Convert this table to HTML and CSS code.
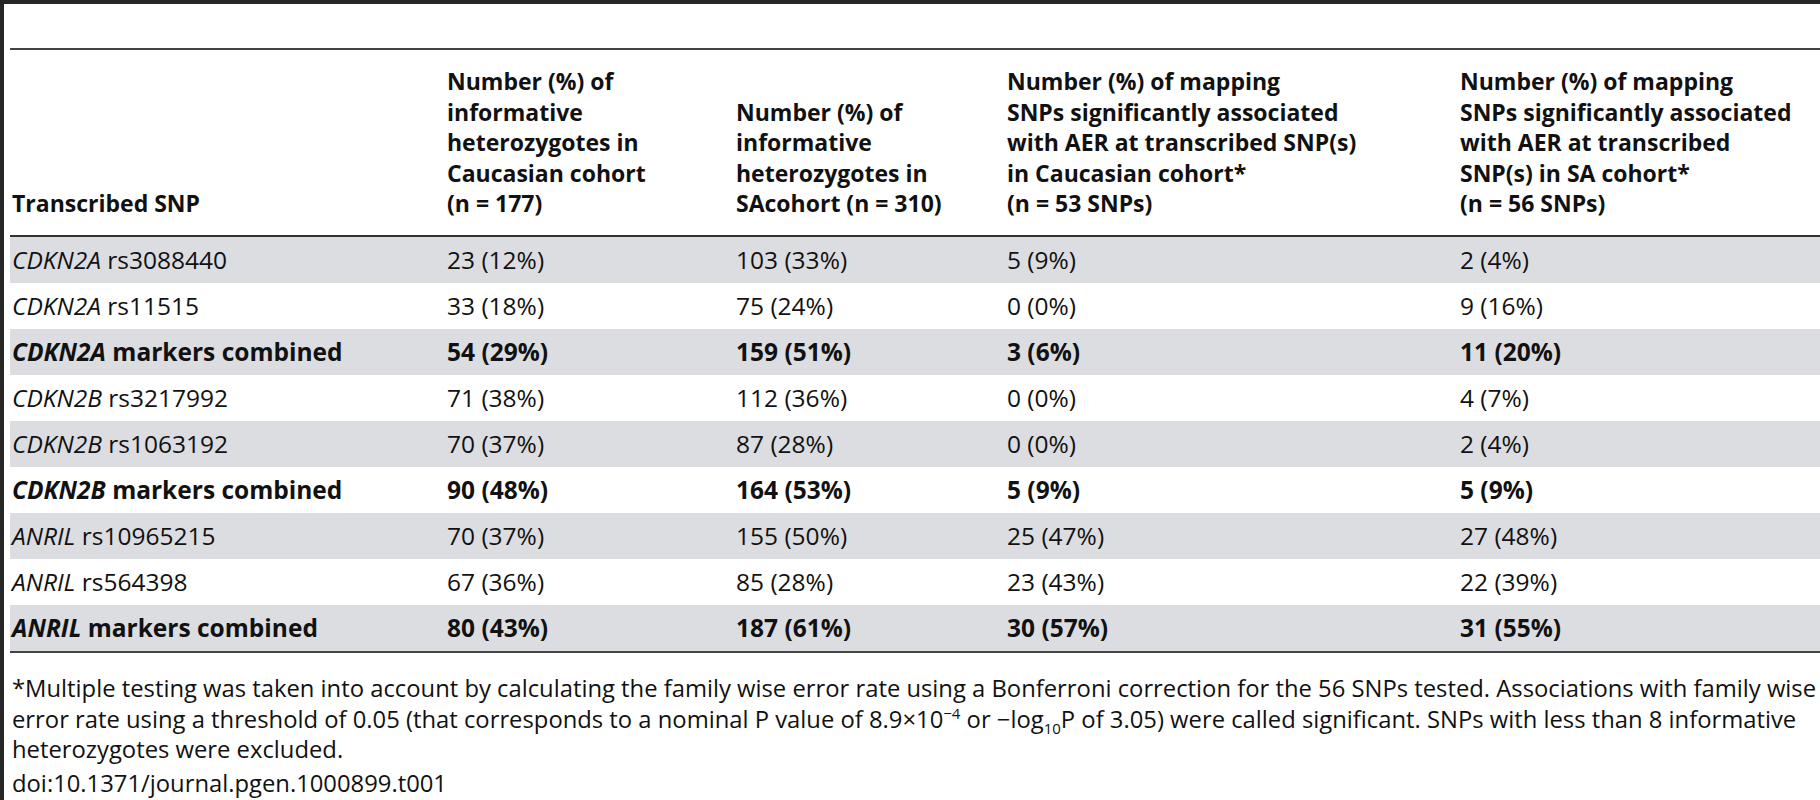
FILE: index.html
```html
<!DOCTYPE html>
<html>
<head>
    <title>Table 1</title>
    <link rel="stylesheet" href="styles.css">
</head>
<body>
    <div class="frame">
        <table class="snp-table">
            <colgroup>
                <col class="c1">
                <col class="c2">
                <col class="c3">
                <col class="c4">
                <col class="c5">
            </colgroup>
            <thead>
                <tr>
                    <th>Transcribed SNP</th>
                    <th>Number (%) of<br>informative<br>heterozygotes in<br>Caucasian cohort<br>(n = 177)</th>
                    <th>Number (%) of<br>informative<br>heterozygotes in<br>SAcohort (n = 310)</th>
                    <th>Number (%) of mapping<br>SNPs significantly associated<br>with AER at transcribed SNP(s)<br>in Caucasian cohort*<br>(n = 53 SNPs)</th>
                    <th>Number (%) of mapping<br>SNPs significantly associated<br>with AER at transcribed<br>SNP(s) in SA cohort*<br>(n = 56 SNPs)</th>
                </tr>
            </thead>
            <tbody>
                <tr class="shade">
                    <td><i>CDKN2A</i> rs3088440</td><td>23 (12%)</td><td>103 (33%)</td><td>5 (9%)</td><td>2 (4%)</td>
                </tr>
                <tr>
                    <td><i>CDKN2A</i> rs11515</td><td>33 (18%)</td><td>75 (24%)</td><td>0 (0%)</td><td>9 (16%)</td>
                </tr>
                <tr class="shade total">
                    <td><i>CDKN2A</i> markers combined</td><td>54 (29%)</td><td>159 (51%)</td><td>3 (6%)</td><td>11 (20%)</td>
                </tr>
                <tr>
                    <td><i>CDKN2B</i> rs3217992</td><td>71 (38%)</td><td>112 (36%)</td><td>0 (0%)</td><td>4 (7%)</td>
                </tr>
                <tr class="shade">
                    <td><i>CDKN2B</i> rs1063192</td><td>70 (37%)</td><td>87 (28%)</td><td>0 (0%)</td><td>2 (4%)</td>
                </tr>
                <tr class="total">
                    <td><i>CDKN2B</i> markers combined</td><td>90 (48%)</td><td>164 (53%)</td><td>5 (9%)</td><td>5 (9%)</td>
                </tr>
                <tr class="shade">
                    <td><i>ANRIL</i> rs10965215</td><td>70 (37%)</td><td>155 (50%)</td><td>25 (47%)</td><td>27 (48%)</td>
                </tr>
                <tr>
                    <td><i>ANRIL</i> rs564398</td><td>67 (36%)</td><td>85 (28%)</td><td>23 (43%)</td><td>22 (39%)</td>
                </tr>
                <tr class="shade total">
                    <td><i>ANRIL</i> markers combined</td><td>80 (43%)</td><td>187 (61%)</td><td>30 (57%)</td><td>31 (55%)</td>
                </tr>
            </tbody>
        </table>

        <div class="footnote">
            <p>*Multiple testing was taken into account by calculating the family wise error rate using a Bonferroni correction for the 56 SNPs tested. Associations with family wise<br>error rate using a threshold of 0.05 (that corresponds to a nominal P value of 8.9&times;10<sup>&minus;4</sup> or &minus;log<sub>10</sub>P of 3.05) were called significant. SNPs with less than 8 informative<br>heterozygotes were excluded.</p>
            <p class="doi">doi:10.1371/journal.pgen.1000899.t001</p>
        </div>
    </div>
</body>
</html>
```

FILE: styles.css
```css
html, body {
    margin: 0;
    padding: 0;
    background: #fff;
    overflow: hidden;
}

body {
    font-family: "Open Sans", "DejaVu Sans", sans-serif;
    color: #111;
    width: 1820px;
    height: 800px;
}

/* Dark frame on top and left, like the figure viewer */
.frame {
    border-top: 4px solid #262626;
    border-left: 4px solid #262626;
    padding: 44px 0 4px 6px;
    width: 1900px;
    box-sizing: border-box;
}

.snp-table {
    border-collapse: collapse;
    table-layout: fixed;
    width: 1870px;
    border-top: 2px solid #444;
    border-bottom: 2px solid #444;
}

.c1 { width: 435px; }
.c2 { width: 289px; }
.c3 { width: 271px; }
.c4 { width: 453px; }
.c5 { width: 422px; }

.snp-table th {
    text-align: left;
    vertical-align: bottom;
    font-size: 23px;
    font-weight: 700;
    line-height: 30.6px;
    padding: 16px 0 16px 2px;
    border-bottom: 2px solid #333;
    white-space: nowrap;
}

.snp-table td {
    height: 46px;
    padding: 0 0 0 2px;
    font-size: 24.5px;
    line-height: 46px;
    white-space: nowrap;
}

.snp-table tr.shade td {
    background: #dcdde0;
}

.snp-table tr.total td {
    font-weight: 700;
}

.footnote {
    font-size: 23.8px;
    line-height: 30.6px;
    padding-left: 2px;
    padding-top: 20px;
    white-space: nowrap;
}

.footnote p {
    margin: 0;
}

.footnote sup,
.footnote sub {
    font-size: 15px;
    line-height: 0;
}

.footnote .doi {
    margin-top: 3px;
}
```
